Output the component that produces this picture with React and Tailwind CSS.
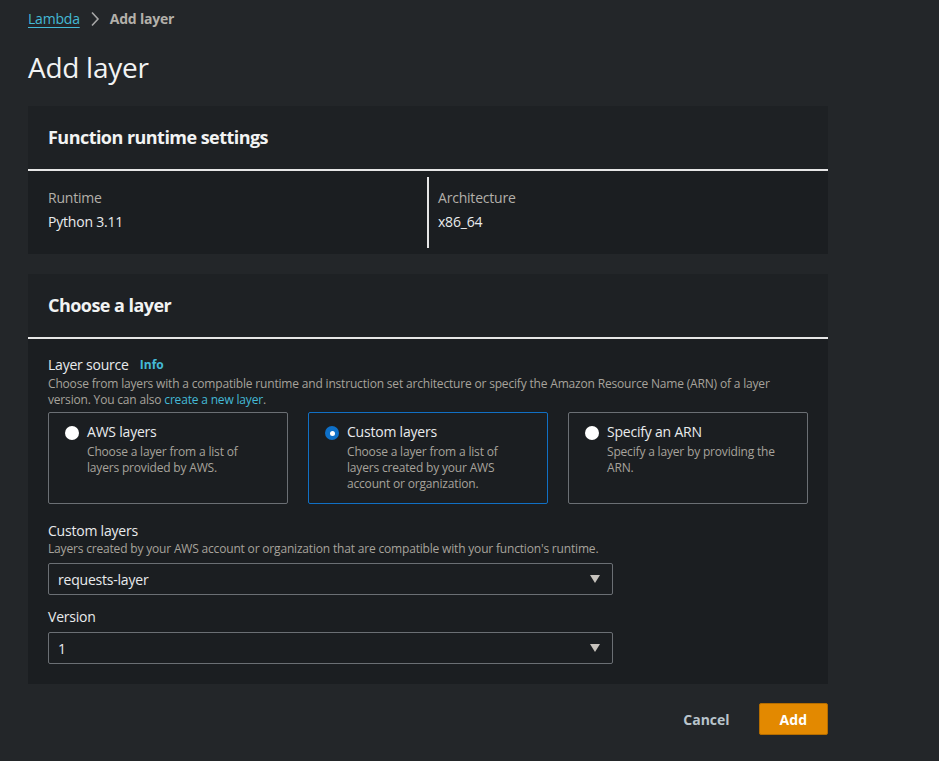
import React, { useState } from "react";

const font = { fontFamily: '"Open Sans", "Noto Sans", sans-serif' };

const Caret = () => (
  <svg width="12" height="10" viewBox="0 0 12 10" className="shrink-0">
    <path d="M1 1h10L6 9z" fill="#c7c3bd" />
  </svg>
);

const Tile = ({ title, desc, selected, onClick }) => (
  <button
    onClick={onClick}
    className={`flex items-start gap-2 text-left px-4 pt-[9px] pb-3 h-[92px] rounded-[2px] border ${
      selected ? "border-[#1170c4] bg-[#1b1e21]" : "border-[#6b6f74] bg-[#1b1e21]"
    }`}
  >
    <span
      className={`mt-[4px] w-[14px] h-[14px] rounded-full shrink-0 flex items-center justify-center ${
        selected ? "bg-[#0e70c8]" : "bg-white"
      }`}
    >
      {selected && <span className="w-[5px] h-[5px] rounded-full bg-white" />}
    </span>
    <span className="flex flex-col">
      <span className="text-[14px] leading-[20px] text-[#e9ebed] tracking-[-0.015em]">{title}</span>
      <span className="text-[12px] leading-[16px] text-[#a7a39c] mt-[2px] tracking-[-0.015em]">{desc}</span>
    </span>
  </button>
);

const Select = ({ value }) => (
  <div className="flex items-center justify-between h-[32px] w-[565px] px-[9px] pr-[11px] border border-[#6b6f74] rounded-[2px] bg-[#1b1e21]">
    <span className="text-[14px] text-[#e9ebed] tracking-[-0.015em]">{value}</span>
    <Caret />
  </div>
);

export default function App() {
  const [source, setSource] = useState("custom");

  return (
    <div className="min-h-screen bg-[#232629] px-7 pt-[9px] pb-6" style={font}>
      <nav className="flex items-center gap-[10px] text-[14px] leading-[20px] tracking-[-0.015em]">
        <a href="#" className="text-[#44b9d6] underline underline-offset-[3px]">Lambda</a>
        <svg width="10" height="16" viewBox="0 0 10 16">
          <path d="M2 1.5l6 6.5-6 6.5" fill="none" stroke="#a7a7a7" strokeWidth="1.6" />
        </svg>
        <span className="font-bold text-[#b3b0aa]">Add layer</span>
      </nav>

      <h1 className="text-[28px] leading-[36px] text-[#f2f3f3] mt-[20px] tracking-[-0.01em]">Add layer</h1>

      <div className="w-[800px] mt-[21px]">
        <section className="bg-[#1b1e21]">
          <div className="h-[65px] bg-[#1e2124] px-5 flex items-center border-b-2 border-[#e6e6e6]">
            <h2 className="text-[18px] font-bold text-[#f2f3f3] tracking-[-0.03em]">Function runtime settings</h2>
          </div>
          <div className="grid grid-cols-2 py-[6px] h-[83px]">
            <div className="px-5 pt-[11px]">
              <div className="text-[14px] leading-[20px] text-[#b3b0aa] tracking-[-0.015em]">Runtime</div>
              <div className="text-[14px] leading-[20px] text-[#e9ebed] mt-[4px] tracking-[-0.015em]">Python 3.11</div>
            </div>
            <div className="border-l-2 border-[#e6e6e6] px-[9px] pt-[11px] -ml-[1px]">
              <div className="text-[14px] leading-[20px] text-[#b3b0aa] tracking-[-0.015em]">Architecture</div>
              <div className="text-[14px] leading-[20px] text-[#e9ebed] mt-[4px] tracking-[-0.015em]">x86_64</div>
            </div>
          </div>
        </section>

        <section className="bg-[#1b1e21] mt-5">
          <div className="h-[65px] bg-[#1e2124] px-5 flex items-center border-b-2 border-[#e6e6e6]">
            <h2 className="text-[18px] font-bold text-[#f2f3f3] tracking-[-0.03em]">Choose a layer</h2>
          </div>
          <div className="px-5 pt-[16px] pb-[20px]">
            <div className="flex items-center gap-[11px]">
              <span className="text-[14px] leading-[20px] text-[#e9ebed] tracking-[-0.015em]">Layer source</span>
              <a href="#" className="text-[12px] font-bold text-[#44b9d6]">Info</a>
            </div>
            <p className="text-[12px] leading-[16px] text-[#a7a39c] mt-[1px] tracking-[-0.015em]">
              Choose from layers with a compatible runtime and instruction set architecture or specify the Amazon Resource Name (ARN) of a layer version. You can also{" "}
              <a href="#" className="text-[#44b9d6]">create a new layer</a>.
            </p>
            <div className="grid grid-cols-3 gap-5 w-[760px] mt-[4px]">
              <Tile
                title="AWS layers"
                desc={<>Choose a layer from a list of<br />layers provided by AWS.</>}
                selected={source === "aws"}
                onClick={() => setSource("aws")}
              />
              <Tile
                title="Custom layers"
                desc={<>Choose a layer from a list of<br />layers created by your AWS<br />account or organization.</>}
                selected={source === "custom"}
                onClick={() => setSource("custom")}
              />
              <Tile
                title="Specify an ARN"
                desc={<>Specify a layer by providing the<br />ARN.</>}
                selected={source === "arn"}
                onClick={() => setSource("arn")}
              />
            </div>

            <div className="mt-[17px] text-[14px] leading-[20px] text-[#e9ebed] tracking-[-0.015em]">Custom layers</div>
            <div className="text-[12px] leading-[16px] text-[#a7a39c] mb-[6px] tracking-[-0.015em]">
              Layers created by your AWS account or organization that are compatible with your function's runtime.
            </div>
            <Select value="requests-layer" />

            <div className="mt-[12px] mb-[5px] text-[14px] leading-[20px] text-[#e9ebed] tracking-[-0.015em]">Version</div>
            <Select value="1" />
          </div>
        </section>

        <div className="flex justify-end items-center gap-[29px] mt-[19px]">
          <button className="text-[14px] font-bold text-[#b9c4cc]">Cancel</button>
          <button className="h-[32px] px-[20px] bg-[#e38900] rounded-[2px] text-[14px] font-bold text-white border border-[#b56d00]">
            Add
          </button>
        </div>
      </div>
    </div>
  );
}
